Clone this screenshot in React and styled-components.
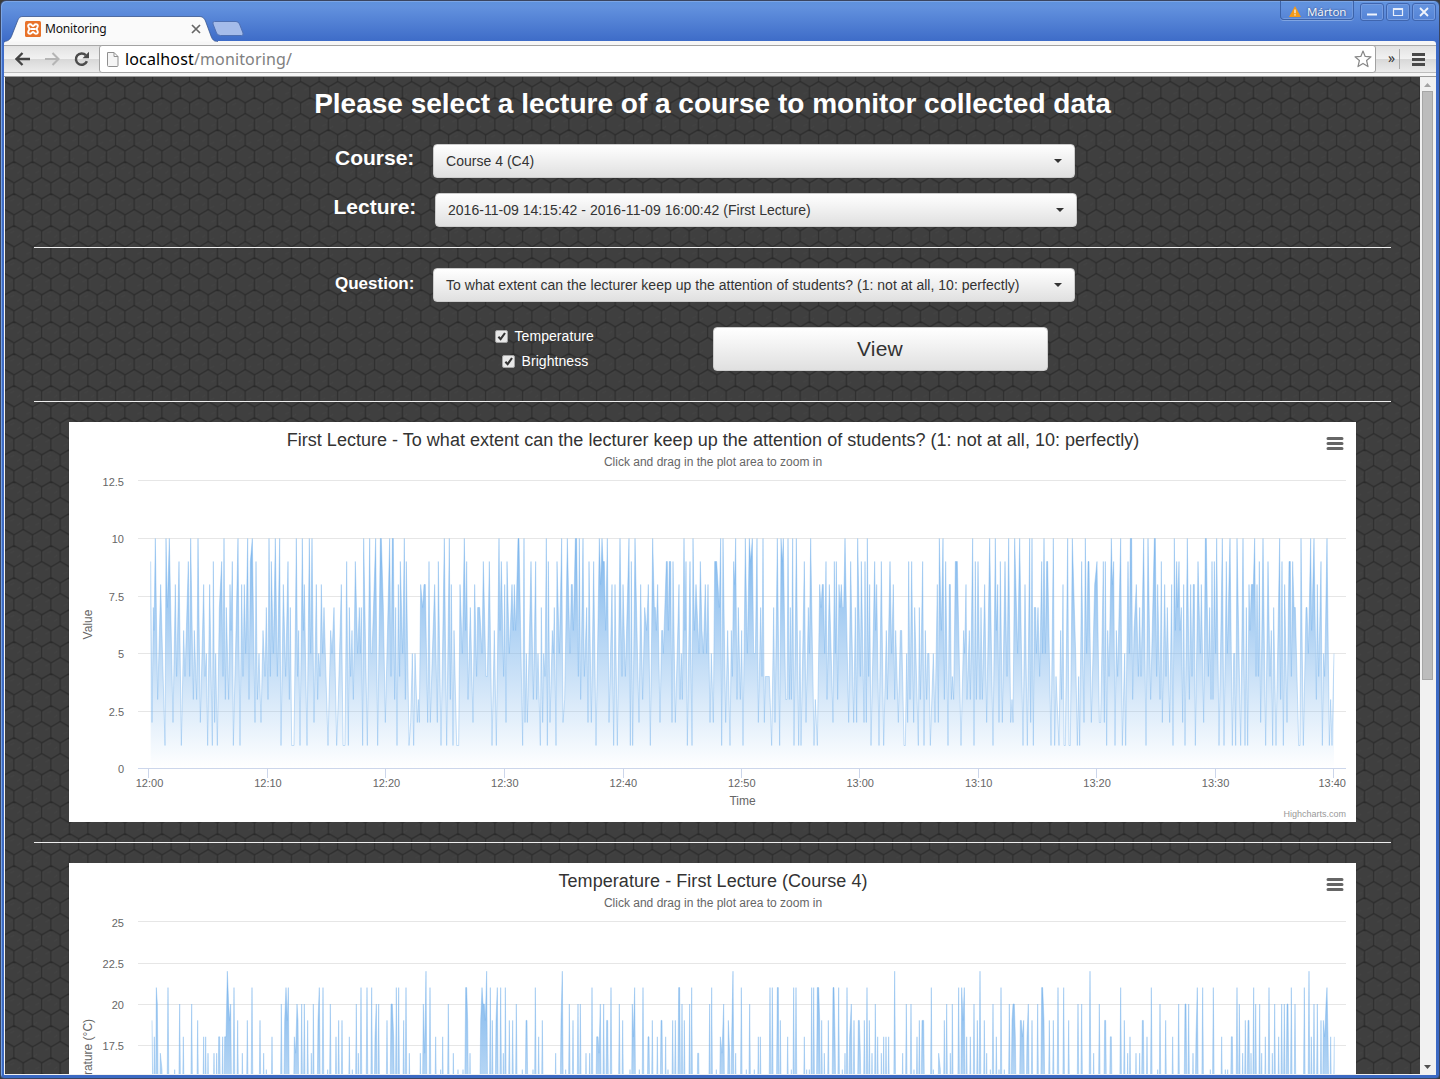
import React from "react";
import styled, { createGlobalStyle } from "styled-components";

const Global = createGlobalStyle`
  * { box-sizing: border-box; }
  body { margin: 0; background: #3b3b38; overflow: hidden; }
`;

const sans = `"Liberation Sans", Arial, sans-serif`;
const ui = `"Noto Sans", sans-serif`;

/* ---------- window chrome ---------- */
const Window = styled.div`
  width: 1440px;
  height: 1079px;
  display: flex;
  flex-direction: column;
  border: 1px solid #3a4560;
  border-radius: 6px 6px 4px 4px;
  background: linear-gradient(#5f93de 0, #6291de 6px, #3e6cc8 40px, #3b69c3 100%);
  box-shadow: inset 1px 1px 0 #7ba5e6;
  padding: 0 3px 3px;
  overflow: hidden;
`;
const TitleBar = styled.div`
  height: 40px;
  flex: none;
  display: flex;
  justify-content: space-between;
`;
const Tabs = styled.div`
  display: flex;
  align-items: flex-end;
`;
const Tab = styled.div`
  position: relative;
  width: 214px;
  height: 25px;
  display: flex;
  align-items: center;
  padding: 0 17px 0 21px;
  font: 12px/16px ${ui};
  letter-spacing: -0.17px;
  color: #111;
`;
const TabShape = styled.svg`
  position: absolute;
  left: 0;
  top: 0;
`;
const TabIcon = styled.svg`
  position: relative;
  flex: none;
`;
const TabTitle = styled.span`
  position: relative;
  margin-left: 4px;
  flex: 1;
`;
const NewTab = styled.svg`
  display: block;
  margin: 0 0 4px -7px;
`;
const Controls = styled.div`
  display: flex;
  align-items: flex-start;
`;
const User = styled.div`
  width: 74px;
  height: 19px;
  margin-right: 6px;
  display: flex;
  align-items: center;
  gap: 6px;
  padding: 3px 0 0 8px;
  border: 1px solid #3c62a8;
  border-top: 0;
  border-radius: 0 0 4px 4px;
  box-shadow: 0 1px 0 #7fa4e2, inset -1px -1px 0 #7099dd;
  color: #f2f5fb;
  font: 11.5px/16px ${ui};
  letter-spacing: -0.1px;
  text-shadow: 0 0 2px #223a6b;
`;
const Control = styled.div`
  width: 24px;
  height: 18px;
  margin: 2px 2px 0 0;
  display: grid;
  place-items: center;
  border: 1px solid #3f65ae;
  border-radius: 3px;
  box-shadow: inset 0 0 0 1px #759ce0;
  &:last-child { margin-right: 0; }
`;
const Toolbar = styled.div`
  height: 36px;
  flex: none;
  display: flex;
  padding-top: 4px;
  border-bottom: 1px solid #9b9b9b;
  border-radius: 3px 3px 0 0;
  background: #f6f6f6;
`;
const ToolRow = styled.div`
  flex: 1;
  height: 28px;
  display: flex;
  align-items: center;
  border-top: 1px solid #a9a9a9;
  border-bottom: 1px solid #bdbdbd;
  background: linear-gradient(#e2e2e2 0, #f2f2f2 50%, #d8d8d8 51%, #ececec 100%);
`;
const ToolIcons = styled.div`
  width: 95px;
  height: 26px;
  display: flex;
  align-items: center;
  gap: 13px;
  padding: 0 0 1px 10.5px;
`;
const Address = styled.div`
  width: 1277px;
  height: 28px;
  display: flex;
  align-items: center;
  padding: 0 3px 1px 7px;
  background: #fff;
  border: 1px solid #a2a2a2;
  border-radius: 3px;
`;
const Url = styled.div`
  flex: 1;
  margin-left: 6px;
  font: 16px/22px ${ui};
  letter-spacing: 0.14px;
  color: #808080;
  b { font-weight: 400; color: #000; }
`;
const More = styled.div`
  width: 24px;
  height: 20px;
  border-right: 1px solid #aaa;
  text-align: center;
  padding-left: 8px;
  font: 14px/17px ${ui};
  color: #333;
`;
const MenuIcon = styled.svg`
  margin-left: 12px;
`;

/* ---------- page ---------- */
const Viewport = styled.div`
  flex: 1;
  min-height: 0;
  display: flex;
  border: 1px solid #f1f1f1;
  border-top: 0;
`;
const Page = styled.div`
  position: relative;
  width: 1415px;
  overflow: hidden;
  background: #3f3f3f;
  font: 14px/20px ${sans};
  color: #fff;
`;
const HexLayer = styled.svg`
  position: absolute;
  left: 0;
  top: 0;
`;
const Content = styled.div`
  position: relative;
  padding: 0 29px;
`;
const Heading = styled.h1`
  margin: 0;
  height: 67px;
  padding-top: 11px;
  text-align: center;
  font: bold 28px/32px ${sans};
`;
const Field = styled.div`
  display: flex;
  height: 34px;
  margin-bottom: ${(p) => p.$gap}px;
  padding-left: ${(p) => p.$left}px;
`;
const Label = styled.label`
  width: ${(p) => p.$width}px;
  font: bold ${(p) => p.$size}px/${(p) => p.$line || 28}px ${sans};
  white-space: nowrap;
`;
const Select = styled.div`
  width: 642px;
  height: 34px;
  display: flex;
  align-items: center;
  justify-content: space-between;
  padding: 0 12px;
  border: 1px solid #ccc;
  border-radius: 4px;
  background: linear-gradient(#fff, #e0e0e0);
  color: #333;
  letter-spacing: 0.024px;
  &::after {
    content: "";
    border: 4px solid transparent;
    border-top-color: #333;
    border-bottom: 0;
  }
`;
const Rule = styled.div`
  height: 1px;
  background: #eee;
  margin-bottom: 20px;
`;
const Actions = styled.div`
  display: flex;
  height: 74px;
`;
const Checks = styled.div`
  width: 679px;
  padding-left: 461px;
  display: flex;
  flex-direction: column;
  gap: 5px;
`;
const Check = styled.div`
  display: flex;
  align-items: center;
  gap: 6.5px;
  height: 20px;
  margin-top: ${(p) => (p.$indent ? 0 : -1)}px;
  padding-left: ${(p) => p.$indent || 0}px;
  letter-spacing: 0.07px;
`;
const ViewButton = styled.button`
  width: 335px;
  height: 44px;
  padding: 0 1px 0 0;
  border: 1px solid #ccc;
  border-radius: 4px;
  background: linear-gradient(#fff, #e0e0e0);
  font: 21px/28px ${sans};
  letter-spacing: 0.2px;
  color: #333;
`;
const ChartCard = styled.div`
  width: 1287px;
  height: 400px;
  margin: 0 35px 20px;
  background: #fff;
`;
const ChartSvg = styled.svg`
  display: block;
  font-family: ${sans};
`;
const Scrollbar = styled.div`
  width: 15px;
  display: flex;
  flex-direction: column;
  align-items: center;
  background: #f1f1f1;
`;
const Thumb = styled.div`
  width: 11px;
  height: 589px;
  border: 1px solid #a6a6a6;
  background: #bcbcbc;
`;
const Arrow = styled.svg`
  display: block;
  flex: none;
  margin-top: ${(p) => (p.$end ? "auto" : "0")};
`;

/* ---------- chart data: [x origin, "x:value" in thirds of a pixel] ---------- */
const votes = [
  [60, "272:9 276:2 280:7 282:6 286:10 293:3 302:8 315:1 318:10 322:7 328:10 339:2 346:8 350:4 357:9 364:1 371:6 375:4 385:9 389:4 392:10 400:3 403:6 410:3 414:10 421:2 431:8 435:4 439:5 443:1 449:8 457:1 460:9 464:2 467:5 472:1 478:7 485:9 489:4 492:10 496:3 499:7 506:3 510:8 513:6 517:9 520:1 528:6 534:10 540:1 545:8 549:4 553:8 557:5 563:10 567:3 571:9 577:10 585:2 588:9 592:3 597:5 603:2 609:6 615:4 619:7 624:3 627:10 631:4 634:9 640:5 646:10 652:4 659:10 663:1 670:8 677:4 684:9 688:3 691:7 695:1 702:1 709:10 713:4 716:6 720:1 727:10 730:6 733:8 741:1 748:10 752:5 756:10 762:2 769:8 773:3 776:5 780:4 784:8 788:5 792:7 804:1 812:6 816:5 822:7 830:1 835:3 844:8 849:1 855:1 860:9 865:1 868:7 872:4 876:6 880:3 886:9 893:5 898:7 901:5 904:7 908:1 911:10 922:1 929:10 933:5 936:5 947:10 953:1 961:10 964:10 970:7 976:2 989:10 993:4 997:10 1000:10 1004:3 1007:7 1011:1 1015:8 1019:4 1021:9 1028:5 1033:10 1036:3 1039:9 1047:1 1052:2 1057:5 1061:1 1065:5 1072:2 1075:3 1078:2 1082:8 1088:7 1092:8 1096:8 1103:2 1107:9 1111:2 1117:5 1124:8 1132:2 1135:9 1143:1 1153:10 1160:1 1168:10 1171:3 1174:8 1179:1 1182:6 1190:1 1196:1"],
  [440, "60:8 67:5 73:10 77:6 80:9 84:3 91:7 99:2 104:8 110:4 113:7 119:7 126:5 130:9 138:4 142:4 148:9 156:1 163:6 169:1 177:10 180:6 184:9 191:4 194:8 198:2 201:9 208:5 216:8 220:6 223:8 227:6 234:10 237:10 248:1 252:10 255:2 259:5 262:2 267:5 273:9 280:3 287:9 290:3 294:5 301:1 304:7 308:2 311:5 315:4 319:10 322:1 325:9 330:2 337:6 340:5 343:7 348:1 351:9 358:5 365:10 369:2 374:3 382:10 390:5 394:8 397:8 400:6 406:10 410:10 415:4 418:10 422:3 429:10 433:4 440:7 444:2 447:9 454:2 461:9 468:1 478:10 482:8 486:10 489:9 493:9 497:6 502:10 507:2 516:8 521:1 525:8 532:1 540:10 546:4 549:8 556:4 567:10 571:1 574:9 578:1 585:10 597:2 602:8 608:3 614:7 620:6 625:8 631:1 638:10 643:7 646:7 649:6 653:8 660:2 665:6 668:6 670:5 679:9 682:9 685:6 688:9 692:9 696:2 699:9 706:2 717:8 720:3 724:5 727:3 732:10 735:6 738:9 742:1 750:9 756:1 759:10 763:6 768:8 777:5 781:9 786:6 790:5 796:8 800:5 804:8 810:2 814:5 820:2 824:9 830:9 838:7 842:10 845:1 849:10 857:2 863:6 870:1 874:6 877:4 881:9 884:8 887:10 891:3 895:7 901:3 905:6 909:1 916:10 922:5 928:10 932:9 937:10 941:5 946:5 951:10 955:2 962:7 966:4 969:10 973:2 976:4 988:4"],
  [750, "65:1 71:7 75:2 82:10 89:1 93:10 97:9 100:10 107:3 111:3 114:10 118:3 121:7 124:3 128:10 132:1 139:10 146:1 150:6 153:1 163:9 168:2 175:7 178:5 182:10 192:1 196:3 202:1 209:8 213:7 217:8 220:8 224:5 228:9 231:3 238:8 249:2 253:9 256:5 259:9 263:3 267:8 270:7 274:8 277:7 281:7 285:10 296:2 302:9 311:2 316:7 320:2 323:10 331:4 334:9 342:2 345:9 349:2 352:10 356:4 359:8 363:1 374:9 377:6 380:8 387:1 394:9 401:1 409:6 412:3 420:9 425:5 430:8 434:3 437:6 445:2 451:6 455:6 462:1 466:1 470:5 473:2 476:9 480:3 485:9 491:2 494:7 505:1 508:7 511:3 518:9 522:1 526:6 530:3 533:5 537:5 541:1 550:5 555:2 562:8 565:2 568:10 574:6 579:10 583:3 587:9 594:1 598:8 601:8 604:3 607:4 611:3 616:9 622:9 633:1 641:6 644:5 648:8 651:3 658:6 661:3 668:10 672:1 676:9 679:3 684:9 690:3 693:7 697:3 704:8 710:2 719:10 729:1 736:10 739:6 743:8 747:2 751:9 757:2 765:9 771:4 776:10 782:2 786:3 789:2 794:10 803:5 809:10 819:1 825:8 832:1 839:10 842:2 846:10 850:1 853:7 857:7 859:5 864:7 869:4 875:9 878:5 882:10 886:5 890:9 893:9 903:1 910:10 914:1 918:4 927:1 932:6 935:3 939:8 942:1 946:1 953:10 957:1 961:1 967:10 977:5 982:1 986:4 989:1"],
  [1040, "125:9 132:2 136:10 140:5 144:9 147:9 154:2 164:8 171:9 178:2 182:2 190:9 193:2 196:9 200:1 203:6 207:4 214:10 217:8 221:9 225:1 229:6 233:4 242:10 247:1 254:5 257:1 264:9 268:5 271:10 275:10 278:3 282:6 289:8 295:4 299:7 303:4 311:10 318:1 324:10 332:3 343:10 346:10 350:4 353:8 360:3 364:9 367:2 374:8 378:4 382:7 389:2 395:8 399:1 403:10 406:6 410:9 413:7 417:9 420:6 424:7 428:2 431:8 435:1 442:10 448:3 452:8 456:4 460:8 463:8 466:1 474:9 481:5 484:8 491:2 496:10 499:10 505:4 509:7 513:3 516:9 519:3 523:9 527:5 530:10 537:1 547:10 552:1 559:9 562:5 570:10 577:1 581:5 584:5 587:1 591:10 602:1 609:10 615:1 619:7 623:1 627:8 630:6 634:8 640:8 644:10 648:4 651:8 655:4 658:9 662:2 669:10 677:1 684:9 690:4 694:6 698:1 701:7 708:1 719:10 722:3 726:9 730:1 734:8 741:2 747:9 751:9 754:4 758:9 762:7 766:7 771:4 776:1 780:1 783:10 790:1 798:7 801:7 805:5 812:10 815:6 822:10 829:3 832:8 836:4 843:9 847:1 851:5 854:4 861:10 868:1 872:3 876:1 882:5"],
];
const temps = [
  [0, "456:19 463:18 469:21 472:20 481:17 486:16 504:21 524:16 539:20 550:18 575:20 593:19 611:18 617:18 624:17 642:17 650:17 656:18 659:18 668:18 674:18 678:18 682:22 686:20 689:19 692:20 702:21 713:19 727:17 742:19 756:21 780:19 791:17 799:16 816:18 844:20 854:19 858:21 862:19 865:21 883:18 887:17 891:20 894:19"],
  [280, "65:20 73:20 83:19 94:17 100:20 114:19 118:21 129:21 143:16 151:20 168:18 176:19 186:19 208:18 217:16 229:20 235:17 243:21 261:21 275:21 285:18 289:20 296:20 321:19 333:20 337:20 341:18 349:21 356:21 371:19 378:21 388:17 421:17 430:20 434:17 438:22 450:21 467:18 482:16 488:18 505:20 520:17 534:16 549:16 557:21 560:21 563:19 570:17 602:19 606:21 609:20 613:20 616:19 620:22 631:21 637:19 648:19 652:21 662:21 670:17 676:21 688:19 698:19 709:20 727:16 738:19 741:19 759:16 766:21 776:18 787:19 827:17 843:19 847:22 857:16 868:20 879:19 894:20 901:20 918:17 929:17 936:21 950:18 954:18 957:17 961:20 971:20 980:19 983:19 993:21 1018:20 1028:19 1050:16 1057:20 1060:18 1064:21 1078:16 1089:21 1104:18 1107:18 1117:19 1132:18 1143:19 1146:19 1157:18 1164:16 1178:19 1186:19 1196:21 1199:21 1206:20 1213:19 1229:20 1235:21 1253:17 1256:17 1289:20 1295:21 1309:16 1321:18 1326:17 1331:20 1345:19 1349:17 1355:18 1359:22 1367:17 1384:21 1399:16 1409:20 1423:16 1435:18 1441:18 1470:21 1477:21 1492:21 1495:21"],
  [770, "31:19 53:18 64:16 71:21 78:21 103:18 110:16 118:16 125:21 131:21 142:21 146:21 149:19 155:19 163:17 175:19 189:21 192:21 195:18 206:21 217:16 225:17 231:21 239:18 244:20 252:19 265:19 268:19 271:17 283:19 291:21 298:19 306:17 316:20 323:18 334:17 341:18 348:18 356:18 374:22 398:17 409:20 423:20 432:16 441:18 448:19 456:19 461:19 484:21 490:16 506:17 511:16 523:19 530:20 541:17 547:20 566:21 575:21 579:19 583:21 590:18 601:18 612:20 622:19 630:22 643:19 650:17 661:16 669:20 679:18 687:16 693:21 703:16 718:20 726:19 729:20 733:20 736:18 751:19 754:19 757:18 761:19 771:18 775:20 786:19 803:20 815:21 818:21 822:19 838:19 850:19 864:21 881:21 896:19 924:20 935:20 960:22 971:17 988:20 1004:19 1007:19 1021:18 1024:18 1052:21 1063:19 1073:17 1080:18 1098:17 1109:17 1117:19 1120:19 1131:18 1144:21 1163:16 1170:20 1187:19 1208:18 1226:20 1245:20 1248:20 1256:20 1269:17 1278:18 1282:21 1298:21 1321:16 1330:21 1355:18 1366:16 1373:16 1384:18 1387:18 1401:21 1408:20 1418:17 1426:19 1434:19 1437:19 1443:17 1451:21 1457:20 1469:20 1475:17 1486:18 1497:21"],
  [1240, "97:17 104:20 116:18 125:20 133:20 141:20 144:20 154:21 165:20 193:21 207:22 214:18 222:20 232:20 243:19 250:19 254:18 258:20 261:21 264:18 272:18 283:18"],
];

const unpack = (groups) =>
  groups.flatMap(([origin, text]) =>
    text.split(" ").map((s) => {
      const [x, v] = s.split(":").map(Number);
      return [origin + x / 3 - 69, v];
    })
  );

/* peaks further apart than two samples fall back to the low level between them */
const withLows = (peaks, low) => {
  const out = [];
  peaks.forEach((p, i) => {
    out.push(p);
    const next = peaks[i + 1];
    if (!next) return;
    const d = next[0] - p[0];
    if (d > 2.8) out.push([p[0] + 1.3, low], [next[0] - 1.3, low]);
    else if (d > 1.8) out.push([p[0] + d / 2, low]);
  });
  return out;
};

const hours = ["12:00", "12:10", "12:20", "12:30", "12:40", "12:50", "13:00", "13:10", "13:20", "13:30", "13:40"];
const hourX = [79.5, 198.5, 316.5, 435.5, 554.5, 672.5, 790.5, 909.5, 1027.5, 1146.5, 1264.5];

function TimeAxis() {
  return (
    <g>
      {hours.map((h, i) => (
        <g key={h}>
          <path d={`M${hourX[i]} 347v9`} stroke="#ccd6eb" />
          <text x={i === 10 ? 1263.2 : 80.5 + i * 118.45} y="365" textAnchor="middle" fontSize="11" fill="#666">{h}</text>
        </g>
      ))}
      <text x="673.5" y="383" textAnchor="middle" fontSize="12" fill="#666">Time</text>
      <text x="1277" y="395" textAnchor="end" fontSize="9" fill="#999">Highcharts.com</text>
    </g>
  );
}

function Chart({ id, title, titleWidth, points, grid, toY, base, top, yTitle, yTitleY, children }) {
  const line = points.map(([x, v]) => `${x.toFixed(2)} ${toY(v).toFixed(2)}`).join("L");
  const area = `M${points[0][0]} ${base}L${line}L${points[points.length - 1][0]} ${base}Z`;
  return (
    <ChartCard>
      <ChartSvg width="1287" height="400">
        <defs>
          <linearGradient id={id} gradientUnits="userSpaceOnUse" x1="0" x2="0" y1={top} y2={base}>
            <stop offset="0" stopColor="#7cb5ec" />
            <stop offset="1" stopColor="#7cb5ec" stopOpacity="0" />
          </linearGradient>
        </defs>
        {grid.map(([label, y], i) => (
          <g key={label}>
            <path d={`M69 ${y}H1277`} stroke={label === "0" ? "#ccd6eb" : "#e6e6e6"} />
            <text x="55" y={y + (i ? 4 : 5)} textAnchor="end" fontSize="11" fill="#666">{label}</text>
          </g>
        ))}
        <path d={area} fill={`url(#${id})`} />
        <path d={`M${line}`} fill="none" stroke="#7cb5ec" strokeOpacity="0.42" strokeLinejoin="bevel" />
        <text x="644" y="24" textAnchor="middle" fontSize="18" fill="#333" textLength={titleWidth}>{title}</text>
        <text x="644" y="44" textAnchor="middle" fontSize="12" fill="#666">Click and drag in the plot area to zoom in</text>
        <text transform={`translate(23 ${yTitleY}) rotate(-90)`} textAnchor="middle" fontSize="12" fill="#666">{yTitle}</text>
        <path d="M1259 16.5h14M1259 21.5h14M1259 26.5h14" stroke="#666" strokeWidth="3" strokeLinecap="round" />
        {children}
      </ChartSvg>
    </ChartCard>
  );
}

const hexEdges = "M9.25-5.33V5.33L0 10.67V21.33L9.25 26.67V37.33M9.25 5.33L18.5 10.67V21.33L9.25 26.67M27.75-5.33V5.33L18.5 10.67V21.33L27.75 26.67V37.33M27.75 5.33L37 10.67V21.33L27.75 26.67";

function HexBackground() {
  return (
    <HexLayer width="1415" height="997">
      <defs>
        <pattern id="hex" width="37" height="32" patternUnits="userSpaceOnUse" patternTransform="translate(18.3 15.3)">
          <rect width="37" height="32" fill="#3f3f3f" />
          <path d="M3 2l4-2M12 17l4-2M2 20l4-2M24 13l4-2M22 30l4-2M31 17l3-2M11 4l3-2M7 29l5-3" stroke="#464646" strokeWidth=".8" />
          <path d={hexEdges} fill="none" stroke="#474747" strokeWidth=".7" transform="translate(1 1)" />
          <path d={hexEdges} fill="none" stroke="#2a2a2a" strokeWidth="1.15" />
        </pattern>
      </defs>
      <rect width="1415" height="997" fill="url(#hex)" />
    </HexLayer>
  );
}

const CheckMark = () => (
  <svg width="13" height="13">
    <rect x=".5" y=".5" width="12" height="12" rx="1.5" fill="#e8e8e8" stroke="#a5a5a5" />
    <path d="M3.4 6.8L5.6 9.2L10 3" fill="none" stroke="#333" strokeWidth="2.1" />
  </svg>
);

export default function App() {
  return (
    <Window>
      <Global />
      <TitleBar>
        <Tabs>
          <Tab>
            <TabShape width="214" height="26" viewBox="0 0 214 26">
              <path d="M0 25.5C5 25 6.5 23 8 19L13.5 5C15 1.500 16 .5 19 .5H195C198 .5 200 1.500 201.500 5L207 20C208.500 24 210 25.500 214 25.500" fill="#fafafa" stroke="#38578f" strokeWidth=".8" />
            </TabShape>
            <TabIcon width="16" height="16" viewBox="0 0 16 16">
              <rect width="16" height="16" rx="1.500" fill="#e8722a" />
              <path d="M5.200 3.300C3.600 3.300 2.800 4.300 3.300 5.600L4.500 8L3.300 10.400C2.800 11.700 3.600 12.700 5.200 12.700C6.800 12.700 7 11 8 11S9.200 12.700 10.800 12.700C12.400 12.700 13.200 11.700 12.700 10.400L11.500 8L12.700 5.600C13.200 4.300 12.400 3.300 10.800 3.300C9.200 3.300 9 5 8 5S6.800 3.300 5.200 3.300ZM5.500 8H10.500" fill="none" stroke="#fff" strokeWidth="1.900" />
            </TabIcon>
            <TabTitle>Monitoring</TabTitle>
            <TabIcon width="10" height="10" viewBox="0 0 10 10">
              <path d="M1 1L9 9M9 1L1 9" stroke="#666" strokeWidth="1.700" />
            </TabIcon>
          </Tab>
          <NewTab width="34" height="17" viewBox="0 0 34 17">
            <path d="M3.500 1.500H25Q27.500 1.500 28.500 4L32 13Q32.800 15.500 30.500 15.500H9.500Q6.500 15.500 5.500 13L2 4Q1.200 1.500 3.500 1.500Z" fill="#a5bcea" stroke="#4f70b2" />
          </NewTab>
        </Tabs>
        <Controls>
          <User>
            <svg width="12" height="11" viewBox="0 0 12 11">
              <path d="M6 0L12 11H0Z" fill="#f29a1a" />
              <path d="M6 3.500V7.300M6 8.300V9.500" stroke="#fff" strokeWidth="1.200" />
            </svg>
            <span>Márton</span>
          </User>
          <Control><svg width="12" height="10"><path d="M1 7.500H11" stroke="#f0f4fc" strokeWidth="2" /></svg></Control>
          <Control><svg width="12" height="10"><path d="M1.500 1.500H10.500V8.500H1.500ZM1.500 2.500H10.500" fill="none" stroke="#e6edfa" strokeWidth="1.200" /></svg></Control>
          <Control><svg width="12" height="10"><path d="M2 1L10 9M10 1L2 9" stroke="#f0f4fc" strokeWidth="1.800" /></svg></Control>
        </Controls>
      </TitleBar>
      <Toolbar>
        <ToolRow>
          <ToolIcons>
            <svg width="16" height="14"><path d="M15 7H2M7.500 1L1.500 7L7.500 13" fill="none" stroke="#444" strokeWidth="2.300" /></svg>
            <svg width="16" height="14"><path d="M1 7H14M8.500 1L14.500 7L8.500 13" fill="none" stroke="#b5b5b5" strokeWidth="2.100" /></svg>
            <svg width="17" height="16"><path d="M12.800 4.200A5.700 5.700 0 1 0 13.900 10.300" fill="none" stroke="#4c4c4c" strokeWidth="2.500" /><path d="M16 .8V7.300H9.500Z" fill="#4c4c4c" /></svg>
          </ToolIcons>
          <Address>
            <svg width="12" height="16"><path d="M.5 1.500H7L11 5.500V14.500Q11 15.500 10 15.500H1.500Q.5 15.500 .5 14.500ZM7 1.500V5.500H11" fill="#f5f5f5" stroke="#909090" /></svg>
            <Url><b>localhost</b>/monitoring/</Url>
            <svg width="18" height="18" viewBox="0 0 18 18"><path d="M9 1L11.200 6.400L17 6.800L12.600 10.500L14 16.600L9 13.400L4 16.600L5.400 10.500L1 6.800L6.800 6.400Z" fill="#fff" stroke="#888" strokeWidth="1.200" strokeLinejoin="round" /></svg>
          </Address>
          <More>»</More>
          <MenuIcon width="13" height="13"><path d="M0 1.500H13M0 6.500H13M0 11.500H13" stroke="#4a4a4a" strokeWidth="3" /></MenuIcon>
        </ToolRow>
      </Toolbar>
      <Viewport>
        <Page>
          <HexBackground />
          <Content>
            <Heading>Please select a lecture of a course to monitor collected data</Heading>
            <Field $left={301} $gap={15}>
              <Label $width={98} $size={21}>Course:</Label>
              <Select>Course 4 (C4)</Select>
            </Field>
            <Field $left={299.500} $gap={20}>
              <Label $width={101.500} $size={21}>Lecture:</Label>
              <Select>2016-11-09 14:15:42 - 2016-11-09 16:00:42 (First Lecture)</Select>
            </Field>
            <Rule />
            <Field $left={301} $gap={25}>
              <Label $width={98} $size={17} $line={32}>Question:</Label>
              <Select>To what extent can the lecturer keep up the attention of students? (1: not at all, 10: perfectly)</Select>
            </Field>
            <Actions>
              <Checks>
                <Check><CheckMark />Temperature</Check>
                <Check $indent={7}><CheckMark />Brightness</Check>
              </Checks>
              <ViewButton>View</ViewButton>
            </Actions>
            <Rule />
            <Chart
              id="votes"
              title="First Lecture - To what extent can the lecturer keep up the attention of students? (1: not at all, 10: perfectly)"
              titleWidth={852.500}
              points={unpack(votes)}
              grid={[["12.5", 58.5], ["10", 116.5], ["7.5", 174.5], ["5", 231.5], ["2.5", 289.5], ["0", 346.5]]}
              toY={(v) => 346.500 - v * 23}
              top={116.500}
              base={346.500}
              yTitle="Value"
              yTitleY={202.500}
            >
              <TimeAxis />
            </Chart>
            <Rule />
            <Chart
              id="temps"
              title="Temperature - First Lecture (Course 4)"
              titleWidth={309}
              points={withLows(unpack(temps), 12)}
              grid={[["25", 58.5], ["22.5", 100.5], ["20", 141.5], ["17.5", 182.5]]}
              toY={(v) => 59 + (25 - v) * 16.400}
              top={108}
              base={346.500}
              yTitle="Temperature (°C)"
              yTitleY={202}
            />
          </Content>
        </Page>
        <Scrollbar>
          <Arrow width="15" height="14"><path d="M4 10L7.500 6L11 10Z" fill="#a3a3a3" /></Arrow>
          <Thumb />
          <Arrow $end width="15" height="14"><path d="M4 5L11 5L7.500 9Z" fill="#505050" /></Arrow>
        </Scrollbar>
      </Viewport>
    </Window>
  );
}
